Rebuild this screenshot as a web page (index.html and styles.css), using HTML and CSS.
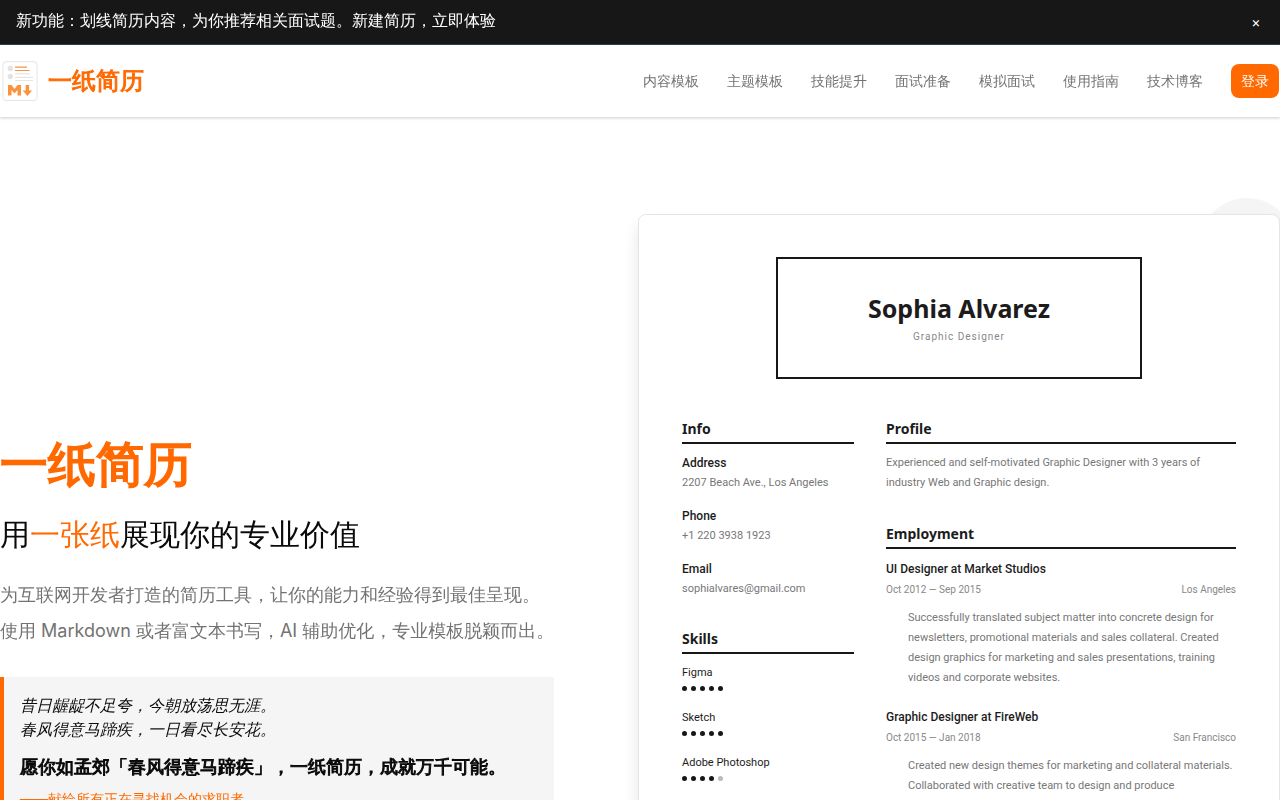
FILE: index.html
```html
<!DOCTYPE html>
<html lang="zh-CN">
<head>
    <meta charset="UTF-8">
    <meta name="viewport" content="width=device-width, initial-scale=1.0">
    <title>一纸简历</title>
    <link rel="stylesheet" href="styles.css">
</head>
<body>

    <div class="notice">
        <p>新功能：划线简历内容，为你推荐相关面试题。新建简历，立即体验</p>
        <button class="notice-close" type="button" aria-label="关闭">×</button>
    </div>

    <header class="header">
        <a class="brand" href="#">
            <svg class="logo" viewBox="0 0 40 40" aria-hidden="true">
                <rect x="3" y="0.700" width="34" height="38.800" rx="3" fill="#fff" stroke="#e5e5e5"/>
                <circle cx="10.300" cy="7.500" r="2.700" fill="#e3e3e3"/>
                <circle cx="10.300" cy="15.500" r="2.700" fill="#e3e3e3"/>
                <path d="M15 6.200h12M15 9.500h14.500" stroke="#fb923c" stroke-width="1.200"/>
                <path d="M15 12.800h15M15 16.300h18M15 19.500h18" stroke="#e5e5e5" stroke-width="1.200"/>
                <path d="M8 34.500V24h3.500l3 4 3-4H21v10.500h-3.500V29l-3 3.500-3-3.500v5.500z" fill="#fb923c"/>
                <path d="M25.700 24h3.400v5.500h3L27.400 35 22.800 29.500h2.900z" fill="#fb923c"/>
            </svg>
            <span>一纸简历</span>
        </a>
        <nav class="nav">
            <a href="#">内容模板</a>
            <a href="#">主题模板</a>
            <a href="#">技能提升</a>
            <a href="#">面试准备</a>
            <a href="#">模拟面试</a>
            <a href="#">使用指南</a>
            <a href="#">技术博客</a>
            <button class="login" type="button">登录</button>
        </nav>
    </header>

    <main class="hero">
        <section class="intro">
            <h1>一纸简历</h1>
            <h2>用<span>一张纸</span>展现你的专业价值</h2>
            <p class="lead">为互联网开发者打造的简历工具，让你的能力和经验得到最佳呈现。<br>使用 Markdown 或者富文本书写，AI 辅助优化，专业模板脱颖而出。</p>
            <blockquote class="quote">
                <p class="poem">昔日龌龊不足夸，今朝放荡思无涯。<br>春风得意马蹄疾，一日看尽长安花。</p>
                <p class="wish">愿你如孟郊「春风得意马蹄疾」，一纸简历，成就万千可能。</p>
                <p class="dedicate">——献给所有正在寻找机会的求职者</p>
            </blockquote>
        </section>

        <div class="preview">
            <article class="resume">
                <div class="nameplate">
                    <h2>Sophia Alvarez</h2>
                    <p>Graphic Designer</p>
                </div>
                <div class="columns">
                    <div class="side">
                        <section class="block">
                            <h3>Info</h3>
                            <dl class="info">
                                <dt>Address</dt>
                                <dd>2207 Beach Ave., Los Angeles</dd>
                                <dt>Phone</dt>
                                <dd>+1 220 3938 1923</dd>
                                <dt>Email</dt>
                                <dd>sophialvares@gmail.com</dd>
                            </dl>
                        </section>
                        <section class="block">
                            <h3>Skills</h3>
                            <ul class="skills">
                                <li>Figma <span class="dots"><i></i><i></i><i></i><i></i><i></i></span></li>
                                <li>Sketch <span class="dots"><i></i><i></i><i></i><i></i><i></i></span></li>
                                <li>Adobe Photoshop <span class="dots"><i></i><i></i><i></i><i></i><i class="off"></i></span></li>
                            </ul>
                        </section>
                    </div>
                    <div class="content">
                        <section class="block">
                            <h3>Profile</h3>
                            <p>Experienced and self-motivated Graphic Designer with 3 years of<br>industry Web and Graphic design.</p>
                        </section>
                        <section class="block">
                            <h3>Employment</h3>
                            <div class="job">
                                <h4>UI Designer at Market Studios</h4>
                                <div class="meta"><span>Oct 2012 — Sep 2015</span><span>Los Angeles</span></div>
                                <p>Successfully translated subject matter into concrete design for<br>newsletters, promotional materials and sales collateral. Created<br>design graphics for marketing and sales presentations, training<br>videos and corporate websites.</p>
                            </div>
                            <div class="job">
                                <h4>Graphic Designer at FireWeb</h4>
                                <div class="meta"><span>Oct 2015 — Jan 2018</span><span>San Francisco</span></div>
                                <p>Created new design themes for marketing and collateral materials.<br>Collaborated with creative team to design and produce</p>
                            </div>
                        </section>
                    </div>
                </div>
            </article>
        </div>
    </main>

</body>
</html>
```
FILE: styles.css
```css
* {
    box-sizing: border-box;
    margin: 0;
    padding: 0;
}

body {
    font-family: Inter, "WenQuanYi Zen Hei", "Noto Sans CJK SC", sans-serif;
    font-size: 16px;
    line-height: 24px;
    color: #0a0a0a;
    background: #fff;
    text-spacing-trim: space-all;
}

a {
    color: inherit;
    text-decoration: none;
}

button {
    font: inherit;
    border: none;
    cursor: pointer;
}

.notice {
    display: flex;
    justify-content: space-between;
    align-items: flex-start;
    padding: 8px 16px 12px;
    color: #fff;
    background: #171717;
    border-bottom: 1px solid #2c3e50;
}

.notice-close {
    width: 16px;
    padding-top: 4px;
    color: #fff;
    background: none;
    font-size: 14px;
    line-height: 20px;
}

.header {
    display: flex;
    justify-content: space-between;
    align-items: center;
    height: 72px;
    padding-right: 1px;
    box-shadow: 0 1px 3px rgba(0, 0, 0, 0.2);
}

.brand {
    display: flex;
    align-items: center;
    gap: 8px;
    color: #ff6900;
    font-size: 24px;
    -webkit-text-stroke: 1px;
}

.logo {
    width: 40px;
    height: 40px;
}

.nav {
    display: flex;
    align-items: center;
    gap: 28px;
    color: #737373;
    font-size: 14px;
}

.login {
    height: 34px;
    padding: 0 10px;
    color: #fff;
    background: #ff6900;
    border-radius: 8px;
}

/* Hero */
.hero {
    display: flex;
    justify-content: space-between;
    align-items: center;
    padding: 97px 0;
    overflow: hidden;
}

.intro {
    padding-bottom: 83px;
}

.intro h1 {
    margin-bottom: 16px;
    color: #ff6900;
    font-size: 48px;
    font-weight: 400;
    line-height: 72px;
    -webkit-text-stroke: 2px;
}

.intro h2 {
    margin-bottom: 25px;
    font-size: 30px;
    font-weight: 400;
    line-height: 36px;
}

.intro h2 span {
    color: #ff6900;
}

.lead {
    margin-bottom: 28px;
    color: #737373;
    font-size: 18px;
    line-height: 36px;
}

.quote {
    padding: 16px;
    background: #f5f5f5;
    border-left: 4px solid #ff6900;
    border-radius: 0 2px 2px 0;
}

.poem {
    font-style: italic;
}

.wish {
    margin: 12px 0 8px;
    font-size: 18px;
    line-height: 28px;
    -webkit-text-stroke: 1px;
}

.dedicate {
    color: #ff6900;
    font-size: 14px;
    line-height: 20px;
}

/* Resume preview */
.preview {
    position: relative;
    box-sizing: content-box;
    width: 50%;
    flex-shrink: 0;
    border: 1px solid #e5e5e5;
    border-radius: 8px;
    box-shadow: 0 10px 15px rgba(0, 0, 0, 0.1);
}

/* circle peeking out behind the corner */
.preview::before {
    content: "";
    position: absolute;
    z-index: -1;
    top: -17px;
    right: -16px;
    width: 96px;
    height: 96px;
    border-radius: 50%;
    background: #f5f5f5;
}

.resume {
    min-height: 905px;
    padding: 42px 43px;
    border-radius: 8px;
    background: #fff;
    color: #1c1c1c;
    font-family: Roboto, sans-serif;
    font-size: 11px;
    line-height: 20px;
}

.nameplate {
    width: 66%;
    margin: 0 auto 40px;
    padding: 30px 0;
    border: 2px solid #171717;
    text-align: center;
}

.nameplate h2 {
    font-family: "Noto Sans", sans-serif;
    font-size: 25px;
    line-height: 38px;
}

.nameplate p {
    color: #888;
    font-size: 10px;
    letter-spacing: 1px;
}

.columns {
    display: grid;
    grid-template-columns: 172fr 350fr;
    gap: 32px;
}

.block {
    margin-bottom: 30px;
}

.content .block {
    margin-bottom: 31px;
}

.block h3 {
    margin-bottom: 9px;
    padding-bottom: 3px;
    border-bottom: 2px solid #171717;
    font-family: "Noto Sans", sans-serif;
    font-size: 14px;
    line-height: 20px;
}

.info dt,
.job h4 {
    font-size: 12px;
    font-weight: 500;
}

.info dd {
    margin-bottom: 13px;
    color: #777;
}

.skills {
    list-style: none;
}

.skills li {
    margin-bottom: 12px;
}

.dots {
    display: flex;
    gap: 4px;
    padding: 3px 0 5px;
}

.dots i {
    width: 5px;
    height: 5px;
    border-radius: 50%;
    background: #171717;
}

.dots .off {
    background: #bbb;
}

.content p {
    color: #777;
}

.job {
    margin-bottom: 18px;
}

.job h4 {
    line-height: 22px;
}

.job p {
    padding: 8px 0 0 22px;
}

.meta {
    display: flex;
    justify-content: space-between;
    color: #888;
    font-size: 10px;
}
```
